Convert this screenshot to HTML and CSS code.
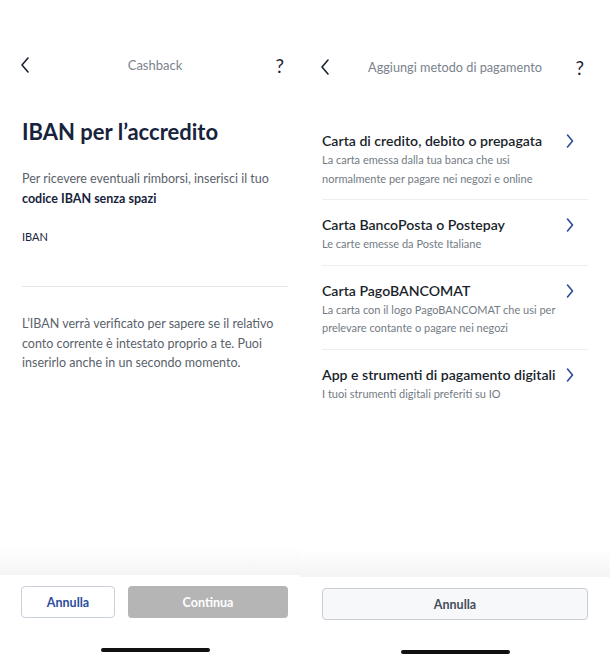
FILE: index.html
```html
<!DOCTYPE html>
<html lang="it">
<head>
    <meta charset="UTF-8" />
    <title>Cashback - Metodo di pagamento</title>
    <link rel="stylesheet" href="styles.css">
</head>
<body>

    <!-- Schermata IBAN -->
    <div class="schermo schermo-iban">
        <div class="intestazione">
            <span class="indietro">
                <svg width="10" height="16" viewBox="0 0 10 16"><path d="M8 1 L2 8 L8 15" /></svg>
            </span>
            <span class="titolo-barra">Cashback</span>
            <span class="aiuto">?</span>
        </div>

        <div class="contenuto">
            <h1>IBAN per l’accredito</h1>
            <p class="testo testo-intro">Per ricevere eventuali rimborsi, inserisci il tuo<br><b>codice IBAN senza spazi</b></p>
            <div class="etichetta">IBAN</div>
            <div class="campo"></div>
            <p class="testo testo-nota">L’IBAN verrà verificato per sapere se il relativo conto corrente è intestato proprio a te. Puoi inserirlo anche in un secondo momento.</p>
        </div>

        <div class="piede">
            <div class="ombra"></div>
            <div class="bottoni">
                <button class="btn annulla">Annulla</button>
                <button class="btn continua" disabled>Continua</button>
            </div>
            <div class="home"></div>
        </div>
    </div>

    <!-- Schermata metodo di pagamento -->
    <div class="schermo schermo-metodi">
        <div class="intestazione">
            <span class="indietro">
                <svg width="10" height="16" viewBox="0 0 10 16"><path d="M8 1 L2 8 L8 15" /></svg>
            </span>
            <span class="titolo-barra">Aggiungi metodo di pagamento</span>
            <span class="aiuto">?</span>
        </div>

        <div class="contenuto">
            <ul class="lista">
                <li class="voce">
                    <div class="voce-testo">
                        <div class="voce-titolo">Carta di credito, debito o prepagata</div>
                        <div class="voce-desc">La carta emessa dalla tua banca che usi<br>normalmente per pagare nei negozi e online</div>
                    </div>
                    <svg class="freccia" width="8" height="14" viewBox="0 0 8 14"><path d="M1.5 1 L6.5 7 L1.5 13" /></svg>
                </li>
                <li class="voce">
                    <div class="voce-testo">
                        <div class="voce-titolo">Carta BancoPosta o Postepay</div>
                        <div class="voce-desc">Le carte emesse da Poste Italiane</div>
                    </div>
                    <svg class="freccia" width="8" height="14" viewBox="0 0 8 14"><path d="M1.5 1 L6.5 7 L1.5 13" /></svg>
                </li>
                <li class="voce">
                    <div class="voce-testo">
                        <div class="voce-titolo">Carta PagoBANCOMAT</div>
                        <div class="voce-desc">La carta con il logo PagoBANCOMAT che usi per<br>prelevare contante o pagare nei negozi</div>
                    </div>
                    <svg class="freccia" width="8" height="14" viewBox="0 0 8 14"><path d="M1.5 1 L6.5 7 L1.5 13" /></svg>
                </li>
                <li class="voce ultima">
                    <div class="voce-testo">
                        <div class="voce-titolo">App e strumenti di pagamento digitali</div>
                        <div class="voce-desc">I tuoi strumenti digitali preferiti su IO</div>
                    </div>
                    <svg class="freccia" width="8" height="14" viewBox="0 0 8 14"><path d="M1.5 1 L6.5 7 L1.5 13" /></svg>
                </li>
            </ul>
        </div>

        <div class="piede">
            <div class="ombra"></div>
            <div class="bottoni">
                <button class="btn annulla-grigio">Annulla</button>
            </div>
            <div class="home"></div>
        </div>
    </div>

</body>
</html>
```

FILE: styles.css
```css
body {
    margin: 0;
    display: flex;
    background: #ffffff;
    font-family: Lato, "Open Sans", sans-serif;
    color: #17233d;
}

.schermo {
    height: 660px;
    display: flex;
    flex-direction: column;
    box-sizing: border-box;
}

.schermo-iban {
    width: 300px;
    padding: 0 12px 0 22px;
}

.schermo-metodi {
    width: 310px;
    padding: 2px 22px 0 22px;
}

/* barra in alto */
.intestazione {
    margin-top: 52px;
    height: 26px;
    display: grid;
    grid-template-columns: 30px 1fr 30px;
    align-items: center;
}

.indietro {
    margin-left: -2px;
    display: flex;
    align-items: center;
}

    .indietro path {
        fill: none;
        stroke: #1b2333;
        stroke-width: 1.6;
        stroke-linecap: round;
        stroke-linejoin: round;
    }

.titolo-barra {
    text-align: center;
    font-size: 13px;
    color: #7a828c;
    white-space: nowrap;
}

.schermo-metodi .titolo-barra {
    font-size: 12.7px;
}

.aiuto {
    justify-self: end;
    margin-right: 4px;
    font-size: 19px;
    color: #1b2333;
}

.contenuto {
    flex: 1;
}

/* schermata IBAN */
h1 {
    margin: 40px 0 0 0;
    font-size: 22px;
    line-height: 28px;
    font-weight: 700;
    color: #17233d;
}

.testo {
    font-size: 12.5px;
    color: #5a626b;
    margin: 0;
}

.testo b {
    color: #17233d;
}

.testo-intro {
    margin-top: 23px;
    line-height: 20px;
}

.testo-nota {
    margin-top: 27px;
    line-height: 19.5px;
}

.etichetta {
    margin-top: 21px;
    font-size: 11px;
    line-height: 14px;
    color: #17233d;
}

.campo {
    height: 42px;
    border-bottom: 1px solid #e4e7eb;
}

/* lista metodi */
.lista {
    list-style: none;
    margin: 36px 0 0 0;
    padding: 0;
}

.voce {
    display: flex;
    align-items: flex-start;
    padding: 15px 0 11px 0;
    border-bottom: 1px solid #eceef1;
}

    .voce.ultima {
        border-bottom: none;
    }

.voce-testo {
    flex: 1;
}

.voce-titolo {
    font-size: 14.1px;
    line-height: 20px;
    font-weight: 600;
    color: #1a1f2b;
}

.voce-desc {
    font-size: 11px;
    line-height: 18.5px;
    color: #737b84;
}

.freccia {
    margin: 3px 14px 0 0;
}

    .freccia path {
        fill: none;
        stroke: #2b4c9b;
        stroke-width: 1.6;
        stroke-linecap: round;
        stroke-linejoin: round;
    }

/* piede con bottoni */
.piede {
    display: flex;
    flex-direction: column;
}

.ombra {
    height: 28px;
    margin: 0 -22px;
    background: linear-gradient(to bottom, rgba(0,0,0,0), rgba(0,0,0,0.045));
}

.schermo-iban .ombra {
    margin: 0 -12px 0 -22px;
}

.bottoni {
    display: flex;
    gap: 13px;
    margin-top: 11px;
}

.btn {
    height: 32px;
    border-radius: 4px;
    font-family: inherit;
    font-size: 12.5px;
    font-weight: 700;
    cursor: pointer;
}

.annulla {
    width: 94px;
    margin-left: -1px;
    background: #ffffff;
    border: 1px solid #c9d0da;
    color: #2b4c9b;
}

.continua {
    flex: 1;
    background: #b5b5b5;
    border: none;
    color: #ffffff;
}

.annulla-grigio {
    flex: 1;
    background: #f6f8fa;
    border: 1px solid #c9cdd2;
    color: #454e59;
}

.home {
    width: 109px;
    height: 4px;
    border-radius: 2px;
    background: #111111;
    margin: 30px auto 8px auto;
}

.schermo-metodi .home {
    margin-bottom: 6px;
}
```
